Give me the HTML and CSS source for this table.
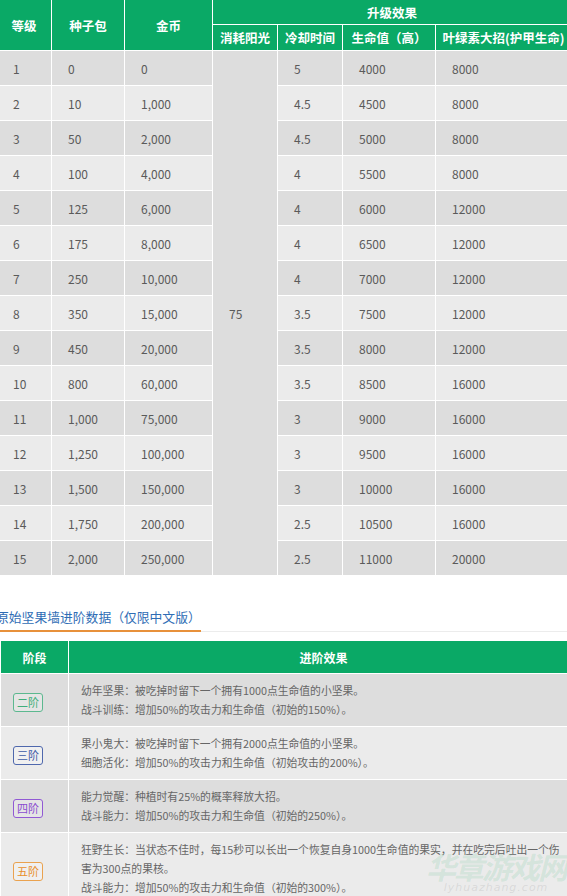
FILE: index.html
```html
<!DOCTYPE html>
<html lang="zh-CN">
<head>
<meta charset="utf-8">
<title>原始坚果墙</title>
<link rel="stylesheet" href="styles.css">
</head>
<body>
<div class="page">
  <table class="lvl">
    <colgroup>
      <col class="c1"><col class="c2"><col class="c3"><col class="c4"><col class="c5"><col class="c6"><col class="c7">
    </colgroup>
    <thead>
      <tr class="h1">
        <th rowspan="2">等级</th>
        <th rowspan="2">种子包</th>
        <th rowspan="2">金币</th>
        <th colspan="4">升级效果</th>
      </tr>
      <tr class="h2">
        <th>消耗阳光</th>
        <th>冷却时间</th>
        <th>生命值（高）</th>
        <th>叶绿素大招(护甲生命)</th>
      </tr>
    </thead>
    <tbody>
      <tr><td>1</td><td>0</td><td>0</td><td rowspan="15" class="sun">75</td><td>5</td><td>4000</td><td>8000</td></tr>
      <tr><td>2</td><td>10</td><td>1,000</td><td>4.5</td><td>4500</td><td>8000</td></tr>
      <tr><td>3</td><td>50</td><td>2,000</td><td>4.5</td><td>5000</td><td>8000</td></tr>
      <tr><td>4</td><td>100</td><td>4,000</td><td>4</td><td>5500</td><td>8000</td></tr>
      <tr><td>5</td><td>125</td><td>6,000</td><td>4</td><td>6000</td><td>12000</td></tr>
      <tr><td>6</td><td>175</td><td>8,000</td><td>4</td><td>6500</td><td>12000</td></tr>
      <tr><td>7</td><td>250</td><td>10,000</td><td>4</td><td>7000</td><td>12000</td></tr>
      <tr><td>8</td><td>350</td><td>15,000</td><td>3.5</td><td>7500</td><td>12000</td></tr>
      <tr><td>9</td><td>450</td><td>20,000</td><td>3.5</td><td>8000</td><td>12000</td></tr>
      <tr><td>10</td><td>800</td><td>60,000</td><td>3.5</td><td>8500</td><td>16000</td></tr>
      <tr><td>11</td><td>1,000</td><td>75,000</td><td>3</td><td>9000</td><td>16000</td></tr>
      <tr><td>12</td><td>1,250</td><td>100,000</td><td>3</td><td>9500</td><td>16000</td></tr>
      <tr><td>13</td><td>1,500</td><td>150,000</td><td>3</td><td>10000</td><td>16000</td></tr>
      <tr><td>14</td><td>1,750</td><td>200,000</td><td>2.5</td><td>10500</td><td>16000</td></tr>
      <tr><td>15</td><td>2,000</td><td>250,000</td><td>2.5</td><td>11000</td><td>20000</td></tr>
    </tbody>
  </table>

  <div class="title-bar">
    <h2 class="title">原始坚果墙进阶数据（仅限中文版）</h2>
  </div>

  <table class="adv">
    <colgroup><col class="a1"><col class="a2"></colgroup>
    <thead>
      <tr><th>阶段</th><th>进阶效果</th></tr>
    </thead>
    <tbody>
      <tr class="odd">
        <td class="stage"><span class="badge b-green">二阶</span></td>
        <td class="eff">幼年坚果：被吃掉时留下一个拥有1000点生命值的小坚果。<br>战斗训练：增加50%的攻击力和生命值（初始的150%）。</td>
      </tr>
      <tr class="even">
        <td class="stage"><span class="badge b-blue">三阶</span></td>
        <td class="eff">果小鬼大：被吃掉时留下一个拥有2000点生命值的小坚果。<br>细胞活化：增加50%的攻击力和生命值（初始攻击的200%）。</td>
      </tr>
      <tr class="odd">
        <td class="stage"><span class="badge b-purple">四阶</span></td>
        <td class="eff">能力觉醒：种植时有25%的概率释放大招。<br>战斗能力：增加50%的攻击力和生命值（初始的250%）。</td>
      </tr>
      <tr class="even">
        <td class="stage"><span class="badge b-orange">五阶</span></td>
        <td class="eff">狂野生长：当状态不佳时，每15秒可以长出一个恢复自身1000生命值的果实，并在吃完后吐出一个伤害为300点的果核。<br>战斗能力：增加50%的攻击力和生命值（初始的300%）。</td>
      </tr>
    </tbody>
  </table>

  <div class="watermark" aria-hidden="true">
    <div class="wm-big">华章游戏网</div>
    <div class="wm-small">lyhuazhang.com</div>
  </div>
</div>
</body>
</html>
```

FILE: styles.css
```css
html, body {
  margin: 0;
  padding: 0;
  background: #fff;
  overflow: hidden;
}

body {
  font-family: "Noto Sans CJK SC", "Microsoft YaHei", sans-serif;
  color: #555;
}

.page {
  position: relative;
  width: 567px;
  height: 896px;
  overflow: hidden;
}

table {
  border-collapse: collapse;
  table-layout: fixed;
}

/* ---------- level table ---------- */
.lvl {
  width: 575px;
  margin-left: -4px;
}
.lvl .c1 { width: 55px; }
.lvl .c2 { width: 73px; }
.lvl .c3 { width: 88px; }
.lvl .c4 { width: 65px; }
.lvl .c5 { width: 65px; }
.lvl .c6 { width: 93px; }
.lvl .c7 { width: 136px; }

.lvl th {
  background: #0aa966;
  color: #fff;
  font-weight: bold;
  font-size: 12.5px;
  border: 1px solid #fff;
  border-top: 0;
  padding: 0;
  text-align: center;
  white-space: nowrap;
}
.lvl .h1 th { height: 24px; }
.lvl .h2 th { height: 25px; }

.lvl td {
  height: 34px;
  padding: 0 0 0 16px;
  font-size: 12px;
  color: #5a5a5a;
  border: 1px solid #fff;
  white-space: nowrap;
}
.lvl tbody tr:nth-child(odd) td { background: #dddddd; }
.lvl tbody tr:nth-child(even) td { background: #ebebeb; }
.lvl tbody td.sun { background: #dcdcdc; padding-left: 16px; }

/* ---------- title ---------- */
.title-bar {
  margin: 27px 0 0 -4px;
  border-bottom: 1px solid #ececec;
  height: 29px;
  box-sizing: border-box;
}
.title {
  display: inline-block;
  margin: 0;
  padding: 0;
  font-size: 12.8px;
  line-height: 26px;
  font-weight: normal;
  color: #2f6db5;
  border-bottom: 2px solid #e8913b;
}

/* ---------- advancement table ---------- */
.adv {
  width: 590px;
  margin-top: 9px;
}
.adv .a1 { width: 68px; }
.adv .a2 { width: 522px; }

.adv th {
  background: #0aa966;
  color: #fff;
  font-weight: bold;
  font-size: 12px;
  height: 32px;
  padding: 0;
  text-align: center;
  border: 1px solid #fff;
  border-top: 0;
}
.adv th:last-child { padding-right: 12px; }
.adv td {
  border: 1px solid #fff;
  padding: 7px 12px;
  vertical-align: middle;
}
.adv tr.odd td { background: #dddddd; }
.adv tr.even td { background: #ebebeb; }

.adv td.eff {
  font-size: 10.8px;
  line-height: 19px;
  color: #666;
  padding-right: 20px;
}

.badge {
  display: inline-block;
  font-size: 11px;
  line-height: 17px;
  padding: 0 3px;
  border: 1px solid;
  border-radius: 3px;
  background: rgba(255, 255, 255, 0.25);
}
.b-green { color: #3fae7a; border-color: #5cb88f; }
.b-blue { color: #3d5aa6; border-color: #4f68ad; }
.b-purple { color: #8a4ccf; border-color: #9159d4; }
.b-orange { color: #e88f2c; border-color: #eaa24f; }

/* ---------- watermark ---------- */
.watermark {
  position: absolute;
  right: -4px;
  bottom: 0;
  width: 150px;
  text-align: center;
  pointer-events: none;
}
.wm-big {
  font-size: 30px;
  font-weight: bold;
  font-style: italic;
  color: rgba(60, 180, 120, 0.15);
  line-height: 30px;
  letter-spacing: -2px;
}
.wm-small {
  font-family: "DejaVu Sans", sans-serif;
  font-size: 11px;
  font-style: italic;
  color: rgba(150, 150, 150, 0.22);
  line-height: 14px;
  letter-spacing: 1px;
  margin-bottom: 1px;
}
```
